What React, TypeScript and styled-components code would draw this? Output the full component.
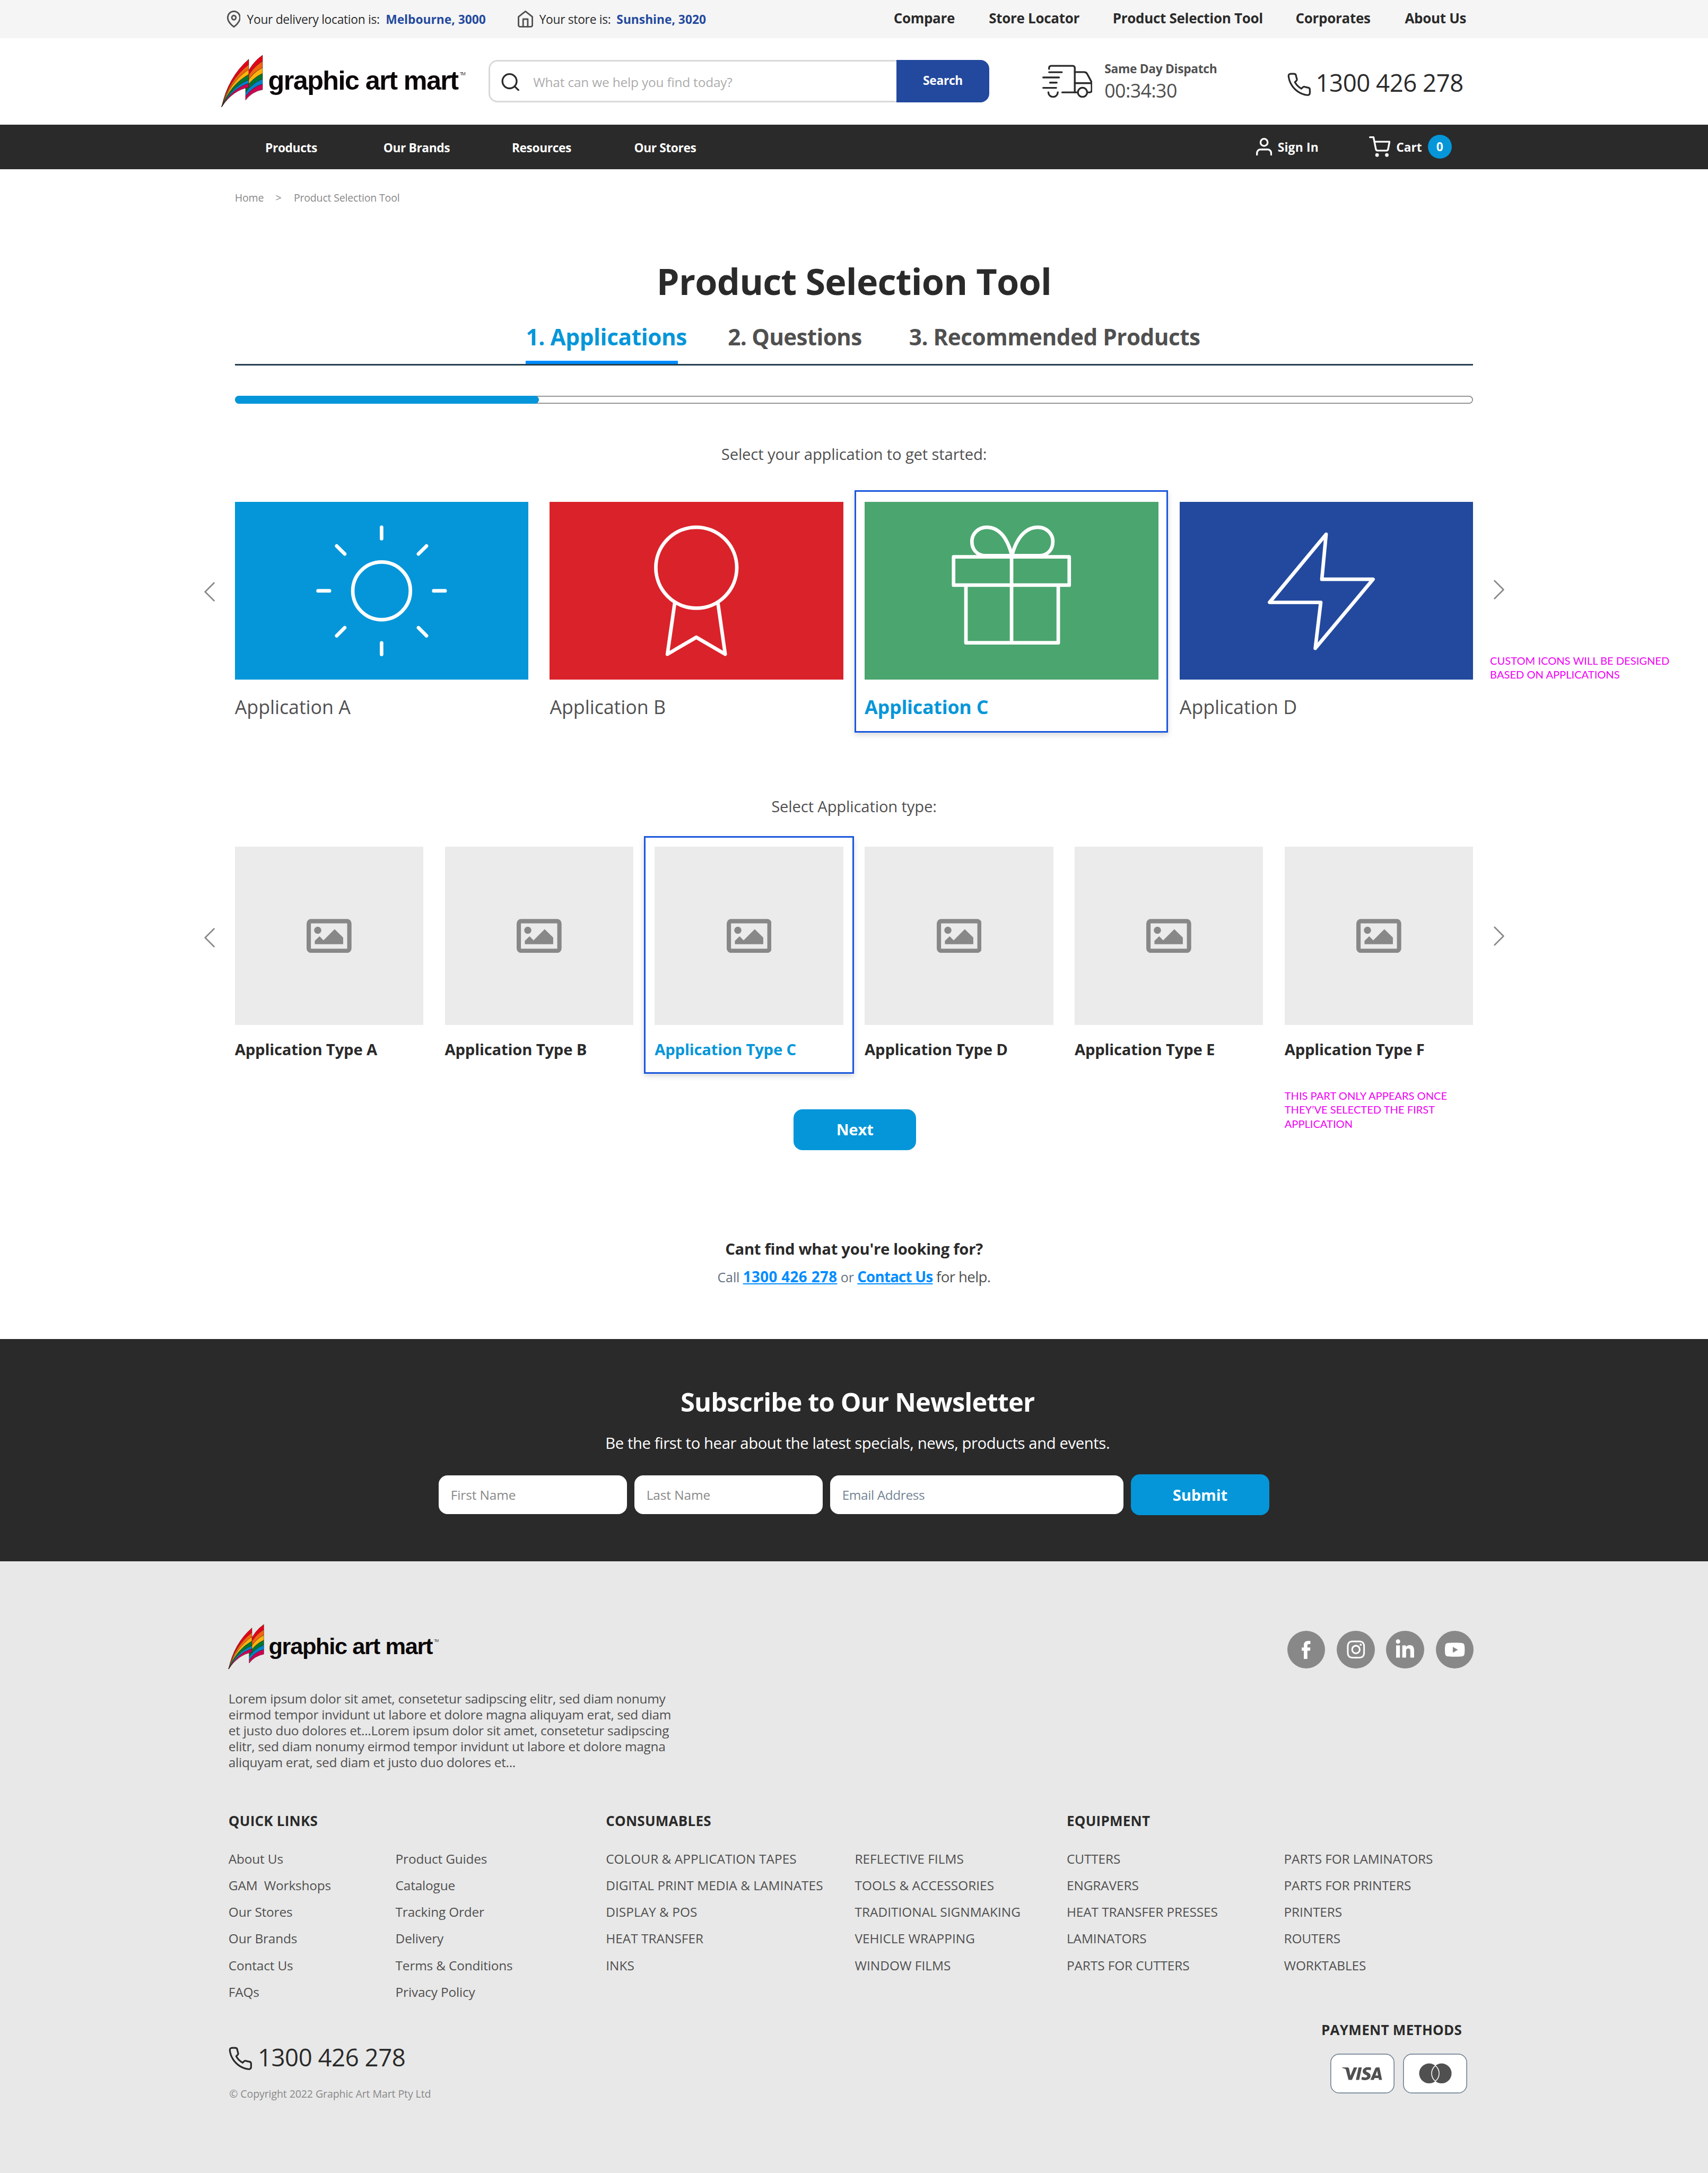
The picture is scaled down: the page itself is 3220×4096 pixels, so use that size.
import React from "react";
import styled, { createGlobalStyle, css } from "styled-components";
import { FaInstagram, FaLinkedinIn, FaYoutube } from "react-icons/fa";
import { SiVisa } from "react-icons/si";

/* 1rem is ten pixels of the 1920px wide design */
const GlobalStyle = createGlobalStyle`
  *, *::before, *::after { box-sizing: border-box; }
  html { font-size: calc(100vw / 192); }
  body {
    margin: 0;
    background: #fff;
    color: #505050;
    font-family: "Open Sans", "Noto Sans", sans-serif;
    overflow: hidden;
  }
  h1, h2, h3, p, ul { margin: 0; padding: 0; font-weight: inherit; }
  ul { list-style: none; }
  a { color: inherit; text-decoration: none; }
  button { border: 0; padding: 0; background: none; color: inherit; font: inherit; }
`;

const color = {
  ink: "#2a2a2a",
  text: "#505050",
  muted: "#888888",
  navy: "#23499e",
  sky: "#0496d9",
  link: "#008cff",
  outline: "#1a57dd",
  note: "#f000f5",
};

const type = (size: number, track = -0.01, weight = 400) => css`
  font-size: ${size * 0.097}rem;
  letter-spacing: ${track}em;
  font-weight: ${weight};
  white-space: nowrap;
`;

const Page = styled.div`
  height: 100vh;
  display: flex;
  flex-direction: column;
  overflow: hidden;
`;

/* ---------- icons ---------- */

const Line = styled.svg<{ $w: number; $h: number; $stroke?: number }>`
  display: block;
  flex: none;
  width: ${(p) => p.$w / 10}rem;
  height: ${(p) => p.$h / 10}rem;
  fill: none;
  stroke: currentColor;
  stroke-width: ${(p) => p.$stroke ?? 2};
  stroke-linecap: round;
  stroke-linejoin: round;
`;

const PinIcon = () => (
  <Line $w={15.4} $h={19} viewBox="2 0 20 24" $stroke={2.2} preserveAspectRatio="none">
    <path d="M21 10c0 7-9 13-9 13s-9-6-9-13a9 9 0 0 1 18 0z" />
    <circle cx="12" cy="10" r="3" />
  </Line>
);
const HomeIcon = () => (
  <Line $w={17.4} $h={19} viewBox="2 1 20 22">
    <path d="M3 9l9-7 9 7v11a2 2 0 0 1-2 2H5a2 2 0 0 1-2-2z" />
    <path d="M9 22V12h6v10" />
  </Line>
);
const SearchIcon = () => (
  <Line $w={20.6} $h={20} viewBox="2 2 20 20">
    <circle cx="11" cy="11" r="8" />
    <path d="M21 21l-4.35-4.35" />
  </Line>
);
const PhoneIcon = () => (
  <Line $w={26.7} $h={26.5} viewBox="1.1 1 22 22" $stroke={1.6}>
    <path d="M22 16.92v3a2 2 0 0 1-2.18 2 19.79 19.79 0 0 1-8.63-3.07 19.5 19.5 0 0 1-6-6 19.79 19.79 0 0 1-3.07-8.67A2 2 0 0 1 4.11 2h3a2 2 0 0 1 2 1.72 12.84 12.84 0 0 0 .7 2.81 2 2 0 0 1-.45 2.11L8.09 9.91a16 16 0 0 0 6 6l1.27-1.27a2 2 0 0 1 2.11-.45 12.84 12.84 0 0 0 2.81.7A2 2 0 0 1 22 16.92z" />
  </Line>
);
const UserIcon = () => (
  <Line $w={18} $h={20} viewBox="3 2 18 20">
    <path d="M20 21v-2a4 4 0 0 0-4-4H8a4 4 0 0 0-4 4v2" />
    <circle cx="12" cy="7" r="4" />
  </Line>
);
const CartIcon = () => (
  <Line $w={24} $h={23} viewBox="0 0 24 23">
    <circle cx="9" cy="21" r="1" />
    <circle cx="20" cy="21" r="1" />
    <path d="M1 1h4l2.68 13.39a2 2 0 0 0 2 1.61h9.72a2 2 0 0 0 2-1.61L23 6H6" />
  </Line>
);
const TruckIcon = () => (
  <Line $w={57} $h={37.5} viewBox="1171 72.3 57 37.5">
    <path d="M1179.2 77v-1.2a2.2 2.2 0 0 1 2.2-2.2h24.5a2.2 2.2 0 0 1 2.2 2.2v27.6" />
    <path d="M1179.2 80.7h14.4M1172.6 86.6h17.8M1180.2 92.4h7.6M1172.6 98.3h14.6" />
    <path d="M1178.4 103.2a5.3 5.3 0 0 0 10.6 0M1194 103.4h17.4" />
    <circle cx="1216.8" cy="103.3" r="5.2" />
    <path d="M1208.1 80.6h10.4c2 0 3 .9 3.6 2.1l4.6 8.6c.3.6.4 1.2.4 1.8v8.3a2 2 0 0 1-2 2h-2.2M1208.1 93h18.6" />
  </Line>
);
const Chevron = ({ flip }: { flip?: boolean }) => (
  <Line $w={12} $h={22} $stroke={1.6} viewBox="0 0 12 22">
    <path d={flip ? "M1 1l10 10L1 21" : "M11 1L1 11l10 10"} />
  </Line>
);

const Tile = styled.svg<{ $bg: string }>`
  display: block;
  width: 33rem;
  height: 20rem;
  background: ${(p) => p.$bg};
  fill: none;
  stroke: #fff;
  stroke-width: 4;
  stroke-linecap: round;
  stroke-linejoin: round;
`;

const SunArt = () => (
  <>
    <circle cx="164.8" cy="100" r="32.4" />
    {[0, 45, 90, 135, 180, 225, 270, 315].map((a) => (
      <path key={a} d="M164.8 28.6v12.8" transform={`rotate(${a} 164.8 100)`} />
    ))}
  </>
);
const RibbonArt = () => (
  <>
    <circle cx="165" cy="74" r="45.5" />
    <path d="M140.8 113.2l-8.3 58 32.5-19 32.5 19-8.3-58" />
  </>
);
const GiftArt = () => (
  <>
    <path d="M100 61.8h130v31.8H100zM113.9 93.6v64.8h103.8V93.6M165.2 61.8v96.6" />
    <path d="M165.6 60.5H136c-10 0-15.4-7.5-15.4-16s7-16 16.7-16c15.5 0 24.1 15 28.3 32z" />
    <path d="M165.6 60.5h30.6c10 0 15.4-7.5 15.4-16s-7-16-16.7-16c-15.5 0-25.1 15-29.3 32z" />
  </>
);
const BoltArt = () => <path d="M164.6 36.4L101 113h57.6l-6.2 51.6L217.4 87h-57.6z" />;

const Placeholder = styled.svg`
  width: 5.05rem;
  height: 3.85rem;
  fill: ${color.muted};
`;
const PictureIcon = () => (
  <Placeholder viewBox="0 0 50 38">
    <rect x="2.4" y="2.5" width="45.2" height="33" rx="2.6" fill="none" stroke={color.muted} strokeWidth="4.8" />
    <circle cx="12.4" cy="12.6" r="4" />
    <path d="M9.1 28.2v-3.7l5.3-5.2 4.4 4.5 12.4-12.3 9.5 9.2v7.5z" />
  </Placeholder>
);

/* ---------- logo ---------- */

const bands = ["#e50019", "#f36512", "#fdb20d", "#007531", "#0083cd", "#cc0052"];
const left = {
  edge: [4.5, 10.5, 16, 21.8, 27.7, 31.7, 36.3],
  ctrl: [[7, 25], [8.2, 27.6], [9.2, 30.1], [10.3, 32.6], [11.4, 35.2], [12.2, 37], [13, 39]],
};
const right = {
  outer: [0, 6.8, 13.8, 20.5, 26.8, 32.5, 38.8],
  ctrl: [8, 14, 20, 26, 31.5, 36, 41],
  inner: [24, 28.5, 33, 37.5, 42, 46.3, 50.5],
};

const LogoSvg = styled.svg<{ $scale: number }>`
  display: block;
  flex: none;
  width: ${(p) => 27.6 * p.$scale}rem;
  height: ${(p) => 5.8 * p.$scale}rem;
  font-family: "Liberation Sans", Arial, sans-serif;
  overflow: visible;
`;

const Logo = ({ scale = 1 }: { scale?: number }) => (
  <LogoSvg $scale={scale} viewBox="0 0 276 58">
    <g stroke="#1d1208" strokeWidth="0.3" strokeLinejoin="round">
      {bands.map((fill, i) => (
        <path
          key={`r${fill}`}
          fill={fill}
          d={`M45.9 ${right.outer[i]}Q34 ${right.ctrl[i]} 26.8 ${right.inner[i]}V${right.inner[i + 1]}Q34 ${right.ctrl[i + 1]} 45.9 ${right.outer[i + 1]}z`}
        />
      ))}
      {bands.map((fill, i) => (
        <path
          key={`l${fill}`}
          fill={fill}
          d={`M30.4 ${left.edge[i]}Q${left.ctrl[i].join(" ")} 0 58Q${left.ctrl[i + 1].join(" ")} 30.4 ${left.edge[i + 1]}z`}
        />
      ))}
    </g>
    <text x="52.2" y="39" fontSize="30" fontWeight="700" fill="#0c0809" textLength="214.4">
      graphic art mart
    </text>
    <text x="267.8" y="22.8" fontSize="5" fill="#333" textLength="6.4">
      TM
    </text>
  </LogoSvg>
);

/* ---------- top bar ---------- */

const TopBar = styled.div`
  flex: none;
  display: flex;
  justify-content: space-between;
  height: 4.3rem;
  padding: 0 23.1rem 0 25.5rem;
  background: #f5f5f5;
`;
const Locations = styled.div`
  display: grid;
  grid-template-columns: 2.26rem 15.6rem 14.83rem 2.43rem 8.69rem auto;
  align-items: center;
  ${type(14, -0.0125)}
  color: ${color.ink};
  svg { color: ${color.text}; }
`;
const Place = styled.a`
  font-weight: 700;
  color: ${color.navy};
  letter-spacing: 0;
`;
const TopLinks = styled.nav`
  display: grid;
  grid-template-columns: 10.71rem 13.92rem 20.56rem 12.28rem 10.98rem;
  align-items: center;
  padding-bottom: 0.28rem;
  ${type(16, -0.012, 700)}
  color: ${color.ink};
`;

/* ---------- header ---------- */

const Header = styled.header`
  flex: none;
  display: grid;
  grid-template-columns: 30.04rem 62.15rem 27.63rem auto;
  align-items: center;
  height: 9.7rem;
  padding: 0 0 0.06rem 24.9rem;
`;
const SearchBox = styled.form`
  display: flex;
  width: 56.24rem;
  height: 4.8rem;
`;
const SearchField = styled.label`
  flex: 1;
  display: flex;
  align-items: center;
  gap: 1.54rem;
  padding: 0.18rem 0 0 1.22rem;
  border: 0.2rem solid #d9d9d9;
  border-right: 0;
  border-radius: 1rem 0 0 1rem;
  color: ${color.ink};
`;
const SearchHint = styled.span`
  ${type(15, -0.007)}
  color: #acacac;
`;
const SearchButton = styled.button`
  width: 10.38rem;
  padding-bottom: 0.12rem;
  border-radius: 0 1rem 1rem 0;
  background: ${color.navy};
  color: #fff;
  ${type(14, -0.014, 700)}
`;
const Dispatch = styled.div`
  display: flex;
  align-items: center;
  gap: 1.37rem;
  color: ${color.ink};
`;
const DispatchText = styled.div`
  padding-top: 0.04rem;
  color: ${color.text};
`;
const DispatchTitle = styled.div`
  ${type(14, -0.0135, 700)}
  line-height: 2rem;
`;
const Countdown = styled.div`
  ${type(22, -0.0175)}
  line-height: 2.78rem;
`;
const PhoneLine = styled.a<{ $gap: number }>`
  display: flex;
  align-items: center;
  gap: ${(p) => p.$gap}rem;
  ${type(28, -0.0105)}
  line-height: 3.6rem;
  color: ${color.ink};
  svg { margin-top: 0.4rem; }
`;

const Phone = ({ gap }: { gap: number }) => (
  <PhoneLine href="#" $gap={gap}>
    <PhoneIcon />
    1300 426 278
  </PhoneLine>
);
const HeaderPhone = styled.div`
  padding-top: 0.3rem;
`;

/* ---------- navigation ---------- */

const NavBar = styled.div`
  flex: none;
  display: flex;
  justify-content: space-between;
  height: 5rem;
  padding: 0 28.81rem 0 29.82rem;
  background: ${color.ink};
  color: #fff;
  ${type(14, -0.018, 700)}
`;
const NavLinks = styled.nav`
  display: grid;
  grid-template-columns: 13.28rem 14.44rem 13.75rem auto;
  align-items: center;
  padding-top: 0.2rem;
`;
const Account = styled.div`
  display: flex;
  align-items: center;
  letter-spacing: 0;
`;
const Caption = styled.span`
  padding-top: 0.14rem;
`;
const SignIn = styled.a`
  display: flex;
  align-items: center;
  gap: 0.64rem;
  width: 12.72rem;
  letter-spacing: 0.01em;
`;
const Cart = styled.a`
  display: flex;
  align-items: center;
  gap: 0.65rem;
`;
const Badge = styled.span`
  display: grid;
  place-items: center;
  width: 2.7rem;
  height: 2.7rem;
  border-radius: 50%;
  background: ${color.sky};
`;

/* ---------- product selection ---------- */

const Main = styled.main`
  flex: none;
  height: 131.5rem;
  padding: 2.45rem 26.4rem 0;
`;
const Breadcrumb = styled.nav`
  display: grid;
  grid-template-columns: 4.58rem 2.05rem auto;
  ${type(12, -0.009)}
  line-height: 1.6rem;
  color: ${color.muted};
`;
const Title = styled.h1`
  margin-top: 6.04rem;
  text-align: center;
  ${type(42, -0.0115, 700)}
  line-height: 5rem;
  color: ${color.ink};
`;
const Tabs = styled.div`
  display: grid;
  grid-template-columns: 22.7rem 20.37rem auto;
  height: 7.01rem;
  padding: 2.01rem 0 0 32.72rem;
  border-bottom: 0.2rem solid #243f50;
`;
const Tab = styled.div<{ $active?: boolean; $track: number }>`
  display: flex;
  flex-direction: column;
  justify-content: space-between;
  ${type(26, 0, 700)}
  letter-spacing: ${(p) => p.$track}em;
  line-height: 3.6rem;
  color: ${(p) => (p.$active ? color.sky : color.text)};
`;
const Indicator = styled.span`
  width: 17.1rem;
  height: 0.4rem;
  background: ${color.link};
`;
const Progress = styled.div`
  height: 0.9rem;
  margin-top: 3.4rem;
  border-radius: 0.45rem;
  box-shadow: inset 0 0 0 0.1rem ${color.muted};
`;
const ProgressFill = styled.div`
  width: 34.18rem;
  height: 100%;
  border-radius: 0.45rem;
  background: ${color.sky};
`;
const Prompt = styled.p<{ $top: number }>`
  margin-top: ${(p) => p.$top}rem;
  text-align: center;
  ${type(18, -0.006)}
  line-height: 2.6rem;
`;

const Carousel = styled.div<{ $top: number }>`
  display: grid;
  grid-template-columns: 3.47rem 139.2rem 24rem;
  align-items: start;
  margin: ${(p) => p.$top}rem -26.4rem 0 -3.47rem;
`;
const Side = styled.div<{ $top: number; $left?: number }>`
  padding: ${(p) => p.$top}rem 0 0 ${(p) => p.$left ?? 0}rem;
  color: ${color.muted};
`;
const Note = styled.p`
  font-family: Lato, "Open Sans", sans-serif;
  font-size: 1.2rem;
  line-height: 1.6rem;
  white-space: pre-line;
  color: ${color.note};
`;
const SideNote = styled(Note)`
  margin: 6.04rem 0 0 -0.4rem;
`;

const Apps = styled.div`
  display: grid;
  grid-template-columns: repeat(4, 33rem);
  gap: 2.4rem;
  align-items: start;
`;
const Types = styled.div`
  display: grid;
  grid-template-columns: repeat(6, 21.2rem);
  gap: 2.4rem;
  align-items: start;
`;
const picked = css`
  border: 0.2rem solid ${color.outline};
  box-shadow: 0 0.3rem 0.6rem rgba(0, 0, 0, 0.16);
`;
const AppCard = styled.div<{ $selected?: boolean }>`
  ${type(22, -0.0012)}
  ${(p) =>
    p.$selected &&
    css`
      margin: -1.3rem -1.09rem -1.48rem -1.17rem;
      padding: 1.12rem 0.91rem 1.28rem 0.99rem;
      ${picked}
      color: ${color.sky};
      font-weight: 700;
      letter-spacing: -0.006em;
    `}
`;
const AppLabel = styled.div`
  margin-top: 1.52rem;
  line-height: 3rem;
`;
const TypeCard = styled.div<{ $selected?: boolean }>`
  ${type(18, -0.0065, 700)}
  color: ${color.ink};
  ${(p) =>
    p.$selected &&
    css`
      margin: -1.2rem -1.22rem -1.4rem -1.2rem;
      padding: 1.02rem 1.02rem 1.2rem;
      ${picked}
      color: ${color.sky};
    `}
`;
const Thumb = styled.div`
  display: grid;
  place-items: center;
  width: 21.2rem;
  height: 20rem;
  background: #ebebeb;
`;
const TypeLabel = styled.div`
  margin-top: 1.5rem;
  line-height: 2.6rem;
`;

const Actions = styled.div`
  display: grid;
  grid-template-columns: 62.8rem 13.8rem 1fr;
  align-items: start;
  margin-top: 3.04rem;
`;
const Button = styled.button`
  height: 4.6rem;
  padding-top: 0.06rem;
  border-radius: 1rem;
  background: ${color.sky};
  color: #fff;
  ${type(18, -0.006, 700)}
`;
const NextButton = styled(Button)`
  grid-column: 2;
  margin-top: 2.36rem;
  padding: 0 0 0.06rem;
`;
const ActionNote = styled(Note)`
  padding-left: 41.4rem;
`;

const Help = styled.div`
  margin-top: 9.82rem;
  text-align: center;
`;
const HelpTitle = styled.h2`
  ${type(18, -0.0105, 700)}
  line-height: 2.6rem;
  color: ${color.ink};
`;
const HelpLine = styled.p`
  margin-top: 0.54rem;
  ${type(17, -0.022)}
  line-height: 2.4rem;
`;
const HelpSmall = styled.span`
  ${type(15.4, -0.005)}
  color: #66727f;
`;
const HelpLink = styled.a<{ $track: number }>`
  font-weight: 700;
  letter-spacing: ${(p) => p.$track}em;
  color: ${color.link};
  text-decoration: underline;
  text-decoration-thickness: 0.12rem;
  text-underline-offset: 0.12rem;
`;

/* ---------- newsletter ---------- */

const Newsletter = styled.section`
  flex: none;
  display: flex;
  flex-direction: column;
  align-items: center;
  height: 25rem;
  padding-top: 5.07rem;
  background: ${color.ink};
  color: #fff;
`;
const NewsTitle = styled.h2`
  padding-left: 0.8rem;
  ${type(30, -0.0172, 700)}
  line-height: 4rem;
`;
const NewsText = styled.p`
  margin-top: 1.34rem;
  padding-left: 0.8rem;
  ${type(18, -0.0135)}
  line-height: 2.6rem;
`;
const NewsForm = styled.form`
  display: grid;
  grid-template-columns: 21.2rem 21.2rem 33rem 15.6rem;
  gap: 0.8rem;
  align-items: center;
  margin-top: 2.19rem;
`;
const Field = styled.label<{ $tone?: string; $track?: number }>`
  height: 4.4rem;
  padding: 0.05rem 0 0 1.37rem;
  border-radius: 1rem;
  background: #fff;
  color: ${(p) => p.$tone ?? color.muted};
  ${type(15, -0.004)}
  letter-spacing: ${(p) => p.$track ?? -0.004}em;
  line-height: 4.4rem;
`;

/* ---------- footer ---------- */

const FooterArea = styled.footer`
  flex: 1;
  padding: 7.1rem 26.35rem 0 25.69rem;
  background: #e8e8e8;
`;
const FooterTop = styled.div`
  display: flex;
  justify-content: space-between;
  align-items: flex-start;
`;
const Socials = styled.div`
  display: flex;
  gap: 1.3rem;
  margin-top: 0.7rem;
`;
const Social = styled.a<{ $icon: number }>`
  display: grid;
  place-items: center;
  width: 4.26rem;
  height: 4.26rem;
  border-radius: 50%;
  background: ${color.muted};
  color: #fff;
  font-size: ${(p) => p.$icon}rem;
`;
const FacebookMark = styled.svg`
  width: 0.98rem;
  height: 2.04rem;
  fill: currentColor;
`;
const Blurb = styled.p`
  margin-top: 2.42rem;
  ${type(15, -0.0112)}
  line-height: 1.8rem;
  white-space: pre-line;
`;
const Groups = styled.div`
  display: grid;
  grid-template-columns: 42.42rem 51.8rem auto;
  margin-top: 4.46rem;
`;
const GroupTitle = styled.h3`
  ${type(16, 0.009, 700)}
  line-height: 2.4rem;
  color: ${color.ink};
`;
const GroupLists = styled.div<{ $first: number }>`
  display: grid;
  grid-template-columns: ${(p) => p.$first}rem auto;
  margin-top: 1.54rem;
`;
const LinkList = styled.ul<{ $track: number }>`
  ${type(15)}
  letter-spacing: ${(p) => p.$track}em;
  line-height: 3rem;
  white-space: pre;
`;
const FooterBottom = styled.div`
  display: flex;
  justify-content: space-between;
  align-items: flex-start;
  margin-top: 1.525rem;
`;
const Contact = styled.div`
  padding-top: 2.45rem;
`;
const Copyright = styled.p`
  margin-top: 1.58rem;
  padding-left: 0.08rem;
  ${type(12, -0.0045)}
  line-height: 1.6rem;
  color: ${color.muted};
`;
const Payments = styled.div`
  width: 17.2rem;
`;
const PaymentTitle = styled(GroupTitle)`
  padding-left: 0.08rem;
  letter-spacing: 0.011em;
`;
const PaymentCards = styled.div`
  display: flex;
  gap: 1rem;
  margin: 1.45rem 0 0 1.08rem;
`;
const PaymentCard = styled.span`
  display: grid;
  place-items: center;
  width: 7.2rem;
  height: 4.5rem;
  border-radius: 1rem;
  background: #fff;
  box-shadow: inset 0 0 0 0.1rem #738494;
  color: ${color.text};
  font-size: 4.5rem;
`;
const CardMark = styled.svg`
  width: 3.7rem;
  height: 2.3rem;
`;

/* ---------- content ---------- */

const apps = [
  { name: "Application A", bg: "#0496d9", art: <SunArt /> },
  { name: "Application B", bg: "#da222a", art: <RibbonArt /> },
  { name: "Application C", bg: "#4ba56f", art: <GiftArt />, selected: true },
  { name: "Application D", bg: "#23499e", art: <BoltArt /> },
];
const types = ["A", "B", "C", "D", "E", "F"];

const groups = [
  {
    title: "QUICK LINKS",
    first: 18.77,
    track: -0.007,
    lists: [
      ["About Us", "GAM  Workshops", "Our Stores", "Our Brands", "Contact Us", "FAQs"],
      ["Product Guides", "Catalogue", "Tracking Order", "Delivery", "Terms & Conditions", "Privacy Policy"],
    ],
  },
  {
    title: "CONSUMABLES",
    first: 27.98,
    track: 0.001,
    lists: [
      ["COLOUR & APPLICATION TAPES", "DIGITAL PRINT MEDIA & LAMINATES", "DISPLAY & POS", "HEAT TRANSFER", "INKS"],
      ["REFLECTIVE FILMS", "TOOLS & ACCESSORIES", "TRADITIONAL SIGNMAKING", "VEHICLE WRAPPING", "WINDOW FILMS"],
    ],
  },
  {
    title: "EQUIPMENT",
    first: 24.42,
    track: -0.004,
    lists: [
      ["CUTTERS", "ENGRAVERS", "HEAT TRANSFER PRESSES", "LAMINATORS", "PARTS FOR CUTTERS"],
      ["PARTS FOR LAMINATORS", "PARTS FOR PRINTERS", "PRINTERS", "ROUTERS", "WORKTABLES"],
    ],
  },
];

const blurb = [
  "Lorem ipsum dolor sit amet, consetetur sadipscing elitr, sed diam nonumy",
  "eirmod tempor invidunt ut labore et dolore magna aliquyam erat, sed diam",
  "et justo duo dolores et...Lorem ipsum dolor sit amet, consetetur sadipscing",
  "elitr, sed diam nonumy eirmod tempor invidunt ut labore et dolore magna",
  "aliquyam erat, sed diam et justo duo dolores et...",
].join("\n");

export default function App() {
  return (
    <Page>
      <GlobalStyle />
      <TopBar>
        <Locations>
          <PinIcon />
          <span>Your delivery location is:</span>
          <Place href="#">Melbourne, 3000</Place>
          <HomeIcon />
          <span>Your store is:</span>
          <Place href="#">Sunshine, 3020</Place>
        </Locations>
        <TopLinks>
          {["Compare", "Store Locator", "Product Selection Tool", "Corporates", "About Us"].map((t) => (
            <a href="#" key={t}>{t}</a>
          ))}
        </TopLinks>
      </TopBar>

      <Header>
        <Logo />
        <SearchBox>
          <SearchField>
            <SearchIcon />
            <SearchHint>What can we help you find today?</SearchHint>
          </SearchField>
          <SearchButton type="button">Search</SearchButton>
        </SearchBox>
        <Dispatch>
          <TruckIcon />
          <DispatchText>
            <DispatchTitle>Same Day Dispatch</DispatchTitle>
            <Countdown>00:34:30</Countdown>
          </DispatchText>
        </Dispatch>
        <HeaderPhone>
          <Phone gap={0.52} />
        </HeaderPhone>
      </Header>

      <NavBar>
        <NavLinks>
          {["Products", "Our Brands", "Resources", "Our Stores"].map((t) => (
            <a href="#" key={t}>{t}</a>
          ))}
        </NavLinks>
        <Account>
          <SignIn href="#">
            <UserIcon />
            <Caption>Sign In</Caption>
          </SignIn>
          <Cart href="#">
            <CartIcon />
            <Caption>Cart</Caption>
            <Badge>0</Badge>
          </Cart>
        </Account>
      </NavBar>

      <Main>
        <Breadcrumb>
          <a href="#">Home</a>
          <span>&gt;</span>
          <span>Product Selection Tool</span>
        </Breadcrumb>
        <Title>Product Selection Tool</Title>
        <Tabs>
          <Tab $active $track={-0.009}>
            1. Applications
            <Indicator />
          </Tab>
          <Tab $track={-0.0169}>2. Questions</Tab>
          <Tab $track={-0.0124}>3. Recommended Products</Tab>
        </Tabs>
        <Progress>
          <ProgressFill />
        </Progress>

        <Prompt $top={4.39}>Select your application to get started:</Prompt>
        <Carousel $top={4.01}>
          <Side $top={9}>
            <Chevron />
          </Side>
          <Apps>
            {apps.map((a) => (
              <AppCard key={a.name} $selected={a.selected}>
                <Tile $bg={a.bg} viewBox="0 0 330 200">{a.art}</Tile>
                <AppLabel>{a.name}</AppLabel>
              </AppCard>
            ))}
          </Apps>
          <Side $top={8.8} $left={2.3}>
            <Chevron flip />
            <SideNote>{"CUSTOM ICONS WILL BE DESIGNED\nBASED ON APPLICATIONS"}</SideNote>
          </Side>
        </Carousel>

        <Prompt $top={8.48}>Select Application type:</Prompt>
        <Carousel $top={3.2}>
          <Side $top={9.1}>
            <Chevron />
          </Side>
          <Types>
            {types.map((t) => (
              <TypeCard key={t} $selected={t === "C"}>
                <Thumb>
                  <PictureIcon />
                </Thumb>
                <TypeLabel>Application Type {t}</TypeLabel>
              </TypeCard>
            ))}
          </Types>
          <Side $top={8.9} $left={2.3}>
            <Chevron flip />
          </Side>
        </Carousel>

        <Actions>
          <NextButton type="button">Next</NextButton>
          <ActionNote>{"THIS PART ONLY APPEARS ONCE\nTHEY’VE SELECTED THE FIRST\nAPPLICATION"}</ActionNote>
        </Actions>

        <Help>
          <HelpTitle>Cant find what you're looking for?</HelpTitle>
          <HelpLine>
            <HelpSmall>Call </HelpSmall>
            <HelpLink href="#" $track={0.016}>1300 426 278</HelpLink>
            <HelpSmall> or </HelpSmall>
            <HelpLink href="#" $track={-0.027}>Contact Us</HelpLink> for help.
          </HelpLine>
        </Help>
      </Main>

      <Newsletter>
        <NewsTitle>Subscribe to Our Newsletter</NewsTitle>
        <NewsText>Be the first to hear about the latest specials, news, products and events.</NewsText>
        <NewsForm>
          <Field>First Name</Field>
          <Field>Last Name</Field>
          <Field $tone="#738494" $track={-0.0156}>Email Address</Field>
          <Button type="button">Submit</Button>
        </NewsForm>
      </Newsletter>

      <FooterArea>
        <FooterTop>
          <Logo scale={0.862} />
          <Socials>
            <Social href="#" $icon={2}>
              <FacebookMark viewBox="0 0 9.8 20.4">
                <path d="M6.4 20.4v-9.3h3l.4-3.6H6.4V5.3c0-1 .3-1.7 1.7-1.7h1.7V.2C9.4.1 8.400 0 7.200 0 4.400 0 2.400 1.700 2.400 4.800v2.700H0v3.600h2.400v9.300z" />
              </FacebookMark>
            </Social>
            <Social href="#" $icon={2.3}><FaInstagram /></Social>
            <Social href="#" $icon={2.35}><FaLinkedinIn /></Social>
            <Social href="#" $icon={2.35}><FaYoutube /></Social>
          </Socials>
        </FooterTop>
        <Blurb>{blurb}</Blurb>
        <Groups>
          {groups.map((g) => (
            <div key={g.title}>
              <GroupTitle>{g.title}</GroupTitle>
              <GroupLists $first={g.first}>
                {g.lists.map((list) => (
                  <LinkList key={list[0]} $track={g.track}>
                    {list.map((t) => (
                      <li key={t}><a href="#">{t}</a></li>
                    ))}
                  </LinkList>
                ))}
              </GroupLists>
            </div>
          ))}
        </Groups>
        <FooterBottom>
          <Contact>
            <Phone gap={0.62} />
            <Copyright>© Copyright 2022 Graphic Art Mart Pty Ltd</Copyright>
          </Contact>
          <Payments>
            <PaymentTitle>PAYMENT METHODS</PaymentTitle>
            <PaymentCards>
              <PaymentCard><SiVisa /></PaymentCard>
              <PaymentCard>
                <CardMark viewBox="0 0 37 23">
                  <circle cx="11.5" cy="11.5" r="11.2" fill={color.text} />
                  <circle cx="25.5" cy="11.5" r="11.2" fill={color.text} />
                  <path d="M18.5 2.76a11.2 11.2 0 0 1 0 17.48a11.2 11.2 0 0 1 0-17.48z" fill={color.text} stroke="#fff" strokeWidth="0.9" />
                </CardMark>
              </PaymentCard>
            </PaymentCards>
          </Payments>
        </FooterBottom>
      </FooterArea>
    </Page>
  );
}
